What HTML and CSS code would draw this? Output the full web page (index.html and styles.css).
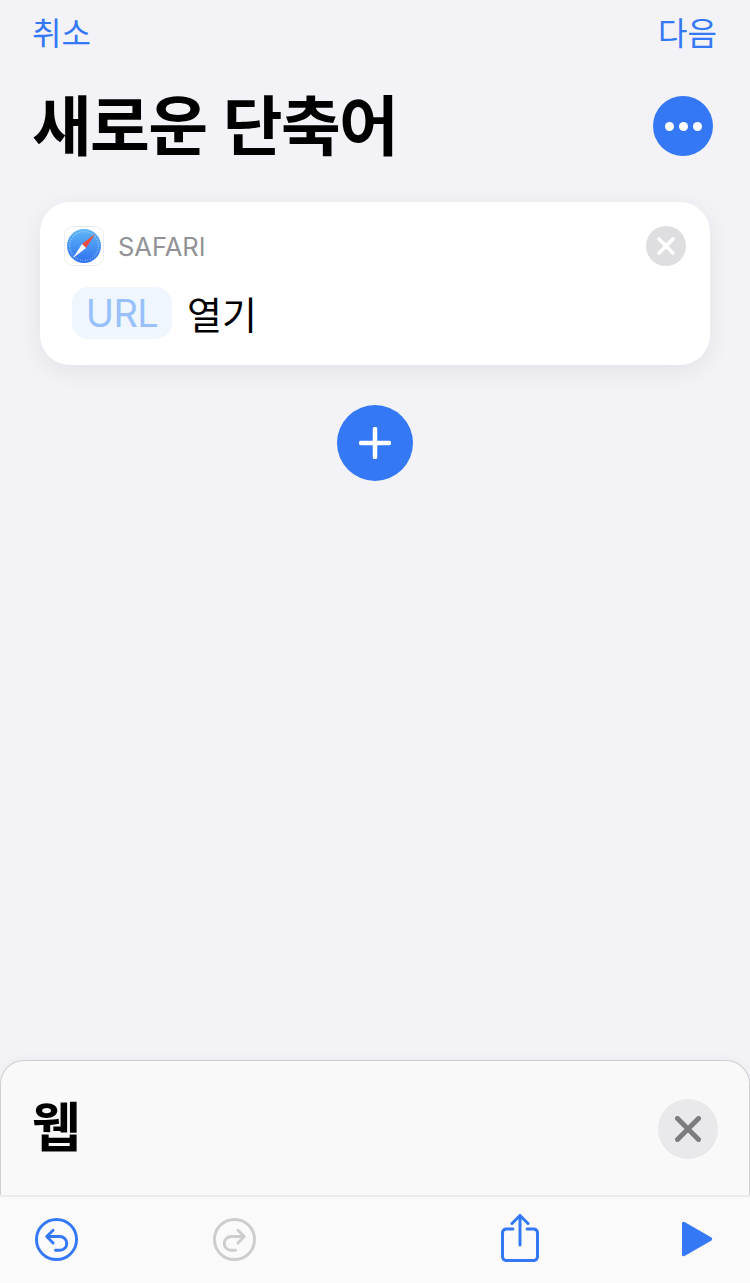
FILE: index.html
```html
<!DOCTYPE html>
<html lang="ko">
<head>
<meta charset="utf-8">
<title>새로운 단축어</title>
<link rel="stylesheet" href="styles.css">
</head>
<body>
<div class="screen">
  <header class="nav">
    <span class="nav-link">취소</span>
    <span class="nav-link">다음</span>
  </header>
  <div class="title-row">
    <h1 class="title">새로운 단축어</h1>
    <div class="more">
      <span class="dot"></span><span class="dot"></span><span class="dot"></span>
    </div>
  </div>
  <section class="card">
    <div class="card-head">
      <svg class="safari" viewBox="0 0 40 40">
        <defs>
          <linearGradient id="sg" x1="0" y1="0" x2="0" y2="1">
            <stop offset="0" stop-color="#5fb8f6"/>
            <stop offset="1" stop-color="#2f6ff0"/>
          </linearGradient>
        </defs>
        <rect x="0.5" y="0.5" width="39" height="39" rx="8.5" fill="#fff" stroke="#ececee"/>
        <circle cx="20" cy="20" r="17" fill="url(#sg)"/>
        <circle cx="20" cy="20" r="14.5" fill="none" stroke="#cfe6fb" stroke-width="1.6" stroke-dasharray="0.8 1.8" opacity="0.6"/>
        <polygon points="31,8 22,22 18,18" fill="#ef4b3d"/>
        <polygon points="9,32 22,22 18,18" fill="#fff"/>
      </svg>
      <span class="app-name">SAFARI</span>
      <div class="remove">
        <svg class="remove-x" viewBox="0 0 20 20"><path d="M3 3L17 17M17 3L3 17"/></svg>
      </div>
    </div>
    <div class="card-body">
      <span class="token">URL</span>
      <span class="action">열기</span>
    </div>
  </section>
  <div class="add-wrap">
    <div class="add">
      <svg class="add-plus" viewBox="0 0 32 32"><path d="M16 2V30M2 16H30"/></svg>
    </div>
  </div>
  <section class="sheet">
    <h2 class="sheet-title">웹</h2>
    <div class="sheet-close">
      <svg class="close-x" viewBox="0 0 26 26"><path d="M2.500 2.500L23.500 23.500M23.500 2.500L2.500 23.500"/></svg>
    </div>
  </section>
  <footer class="toolbar">
    <svg class="tool tool-undo" viewBox="0 0 44 44">
      <circle cx="22" cy="22" r="20.5"/>
      <path d="M13 19H25.500A7 7 0 0 1 25.500 33H21M18.500 12.500L12 19L18.500 25.500"/>
    </svg>
    <svg class="tool tool-redo" viewBox="0 0 44 44">
      <circle cx="22" cy="22" r="20.5"/>
      <path d="M31 19H18.500A7 7 0 0 0 18.500 33H23M25.500 12.500L32 19L25.500 25.500"/>
    </svg>
    <svg class="tool tool-share" viewBox="0 0 38 48">
      <path d="M12 15H5A4 4 0 0 0 1.500 19V42A4 4 0 0 0 5 46.500H33A4 4 0 0 0 36.500 42V19A4 4 0 0 0 33 15H26"/>
      <path d="M19 31V2M11 9.500L19 1.500L27 9.500"/>
    </svg>
    <svg class="tool tool-play" viewBox="0 0 34 38">
      <path d="M2 3.500Q2 1 4.500 2L31.500 17.500Q33 19 31.500 20.500L4.500 36Q2 37 2 34.500Z"/>
    </svg>
  </footer>
</div>
</body>
</html>
```
FILE: styles.css
```css
* { box-sizing: border-box; }
html, body { margin: 0; padding: 0; }
body {
  width: 750px;
  height: 1283px;
  overflow: hidden;
  background: #f2f2f7;
  font-family: "Noto Sans CJK KR", "Inter", sans-serif;
  color: #000;
}
.screen {
  height: 1283px;
  display: flex;
  flex-direction: column;
}
.nav {
  display: flex;
  justify-content: space-between;
  padding: 9px 33px 0 32px;
  height: 66px;
}
.nav-link {
  font-size: 32px;
  line-height: 44px;
  color: #3478f6;
}
.title-row {
  display: flex;
  justify-content: space-between;
  align-items: center;
  padding: 0 37px 0 32px;
  height: 118px;
}
.title {
  margin: -6px 0 0;
  font-size: 65px;
  font-weight: 700;
  line-height: 90px;
  letter-spacing: -1.700px;
}
.more {
  width: 60px;
  height: 60px;
  border-radius: 50%;
  background: #3478f6;
  display: flex;
  justify-content: center;
  align-items: center;
  gap: 5px;
  margin-top: 2px;
}
.dot {
  width: 9px;
  height: 9px;
  border-radius: 50%;
  background: #fff;
}
.card {
  margin: 18px 40px 0;
  height: 163px;
  border-radius: 30px;
  background: #fff;
  box-shadow: 0 6px 24px rgba(0, 0, 0, 0.07);
  padding: 24px 24px 0;
}
.card-head {
  display: flex;
  align-items: center;
  height: 40px;
}
.safari {
  width: 40px;
  height: 40px;
  flex: none;
}
.app-name {
  margin-left: 14px;
  font-family: "Inter", sans-serif;
  font-size: 25.500px;
  color: #929296;
}
.remove {
  margin-left: auto;
  width: 40px;
  height: 40px;
  border-radius: 50%;
  background: #dedee0;
  display: flex;
  align-items: center;
  justify-content: center;
}
.remove-x {
  width: 20px;
  height: 20px;
  fill: none;
  stroke: #fff;
  stroke-width: 3.600;
  stroke-linecap: round;
}
.card-body {
  display: flex;
  align-items: center;
  margin: 21px 0 0 8px;
  gap: 15px;
}
.token {
  width: 100px;
  height: 52px;
  border-radius: 16px;
  background: #eff6fe;
  color: #98c1fb;
  font-family: "Inter", sans-serif;
  font-size: 38px;
  line-height: 53px;
  text-align: center;
  letter-spacing: -0.500px;
}
.action {
  font-size: 38px;
  line-height: 50px;
}
.add-wrap {
  display: flex;
  justify-content: center;
  margin-top: 40px;
}
.add {
  width: 76px;
  height: 76px;
  border-radius: 50%;
  background: #3478f6;
  display: flex;
  align-items: center;
  justify-content: center;
}
.add-plus {
  width: 32px;
  height: 32px;
  fill: none;
  stroke: #fff;
  stroke-width: 4.500;
  stroke-linecap: round;
}
.sheet {
  margin-top: auto;
  height: 135px;
  border: 1px solid #cfcfd2;
  border-bottom: 0;
  border-radius: 24px 24px 0 0;
  background: #f9f9fa;
  display: flex;
  justify-content: space-between;
  padding: 38px 31px 0 31px;
  box-shadow: 0 -2px 8px rgba(0, 0, 0, 0.03);
}
.sheet-title {
  margin: -3px 0 0;
  font-size: 53px;
  font-weight: 700;
  line-height: 56px;
}
.sheet-close {
  width: 60px;
  height: 60px;
  border-radius: 50%;
  background: #e9e9eb;
  display: flex;
  align-items: center;
  justify-content: center;
}
.close-x {
  width: 26px;
  height: 26px;
  fill: none;
  stroke: #7d7d81;
  stroke-width: 5;
  stroke-linecap: round;
}
.toolbar {
  height: 88px;
  flex: none;
  border-top: 2px solid #ebebed;
  background: #fafafa;
  display: flex;
  align-items: center;
  padding: 0 36px 2px 35px;
}
.tool {
  flex: none;
  fill: none;
  stroke-linecap: round;
  stroke-linejoin: round;
}
.tool-undo {
  width: 43px;
  height: 43px;
  stroke: #3478f6;
  stroke-width: 3;
}
.tool-redo {
  width: 43px;
  height: 43px;
  margin-left: 135px;
  stroke: #cdcdcf;
  stroke-width: 3;
}
.tool-share {
  width: 38px;
  height: 48px;
  margin-left: 245px;
  margin-top: -3px;
  stroke: #3478f6;
  stroke-width: 3;
}
.tool-play {
  width: 34px;
  height: 38px;
  margin-left: auto;
  fill: #3478f6;
}
```
